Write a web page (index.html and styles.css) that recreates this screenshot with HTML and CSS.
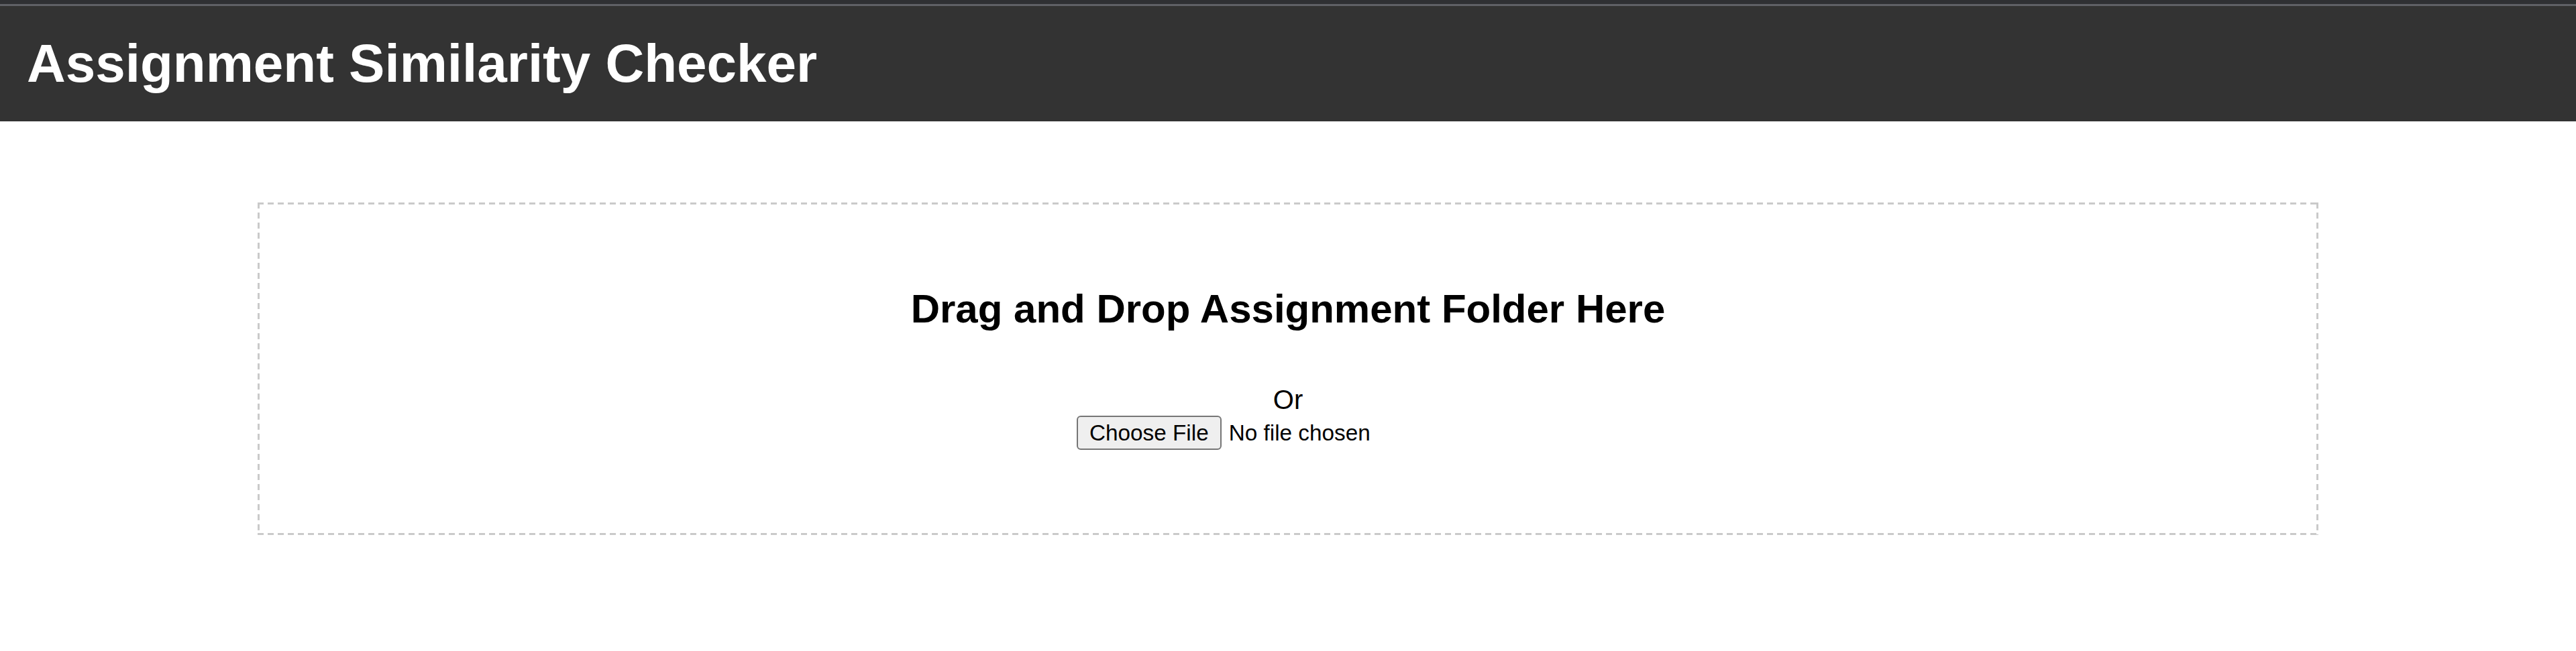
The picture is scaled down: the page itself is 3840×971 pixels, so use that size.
FILE: index.html
```html
<!DOCTYPE html>
<html lang="en">
<head>
<meta charset="utf-8">
<title>Assignment Similarity Checker</title>
<link rel="stylesheet" href="styles.css">
</head>
<body>
<div class="topstrip"></div>
<header class="app-header">
  <h1 class="app-title">Assignment Similarity Checker</h1>
</header>
<main class="content">
  <section class="dropzone">
    <h2 class="dropzone-title">Drag and Drop Assignment Folder Here</h2>
    <p class="dropzone-or">Or</p>
    <div class="file-row">
      <input class="file-input" type="file" webkitdirectory>
    </div>
  </section>
</main>
</body>
</html>
```

FILE: styles.css
```css
html, body {
  margin: 0;
  padding: 0;
  background: #ffffff;
}

body {
  font-family: "Liberation Sans", Arial, sans-serif;
  color: #000;
}

.topstrip {
  height: 5px;
  background: #2f3033;
  border-bottom: 3px solid #606166;
  box-sizing: content-box;
  padding-bottom: 1px;
  background-clip: padding-box;
}

.app-header {
  background: #333333;
  padding: 40px;
}

.app-title {
  margin: 0;
  color: #ffffff;
  font-size: 80px;
  line-height: 92px;
  font-weight: bold;
}

.content {
  padding-top: 121px;
}

.dropzone {
  box-sizing: border-box;
  width: 80%;
  height: 496px;
  margin: 0 auto;
  border: 3px solid transparent;
  background:
    repeating-linear-gradient(90deg, #cacaca 0 9px, transparent 9px 15px) left top / 100% 3px no-repeat border-box,
    repeating-linear-gradient(90deg, #cacaca 0 9px, transparent 9px 15px) left bottom / 100% 3px no-repeat border-box,
    repeating-linear-gradient(180deg, #cacaca 0 9px, transparent 9px 15px) left top / 3px 100% no-repeat border-box,
    repeating-linear-gradient(180deg, #cacaca 0 9px, transparent 9px 15px) right top / 3px 100% no-repeat border-box;
  text-align: center;
  padding-top: 121px;
}

.dropzone-title {
  margin: 0;
  font-size: 60px;
  line-height: 69px;
  font-weight: bold;
}

.dropzone-or {
  margin: 78px 0 0;
  font-size: 40px;
  line-height: 46px;
}

.file-row {
  margin-top: 1px;
  display: flex;
  justify-content: center;
}

.file-input {
  width: 630px;
  height: 51px;
  font-family: "Liberation Sans", Arial, sans-serif;
  font-size: 33.3px;
  color: #000;
  padding: 0;
  margin: 0;
}

.file-input::file-selector-button {
  font-family: inherit;
  font-size: 33.3px;
  height: 51px;
  padding: 0 17px;
  margin: 0 11px 0 0;
  border: 2px solid #767676;
  border-radius: 6px;
  background: #efefef;
  color: #000;
}
```
